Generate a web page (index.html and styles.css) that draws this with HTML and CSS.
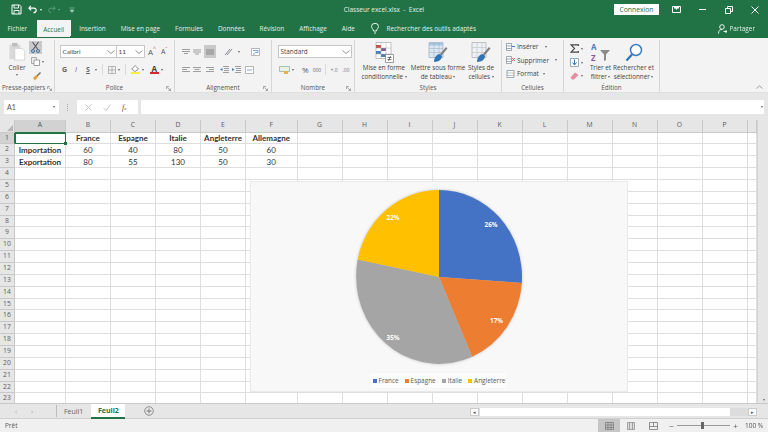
FILE: index.html
```html
<!DOCTYPE html>
<html lang="fr">
<head>
<meta charset="utf-8">
<title>Classeur excel.xlsx - Excel</title>
<link rel="stylesheet" href="styles.css">
</head>
<body>
<div class="app">
  <header class="titlebar">
    <div class="qat">
      <svg class="i-save" width="11" height="11" viewBox="0 0 11 11"><path d="M1 1h7.5L10 2.5V10H1z" fill="none" stroke="#fff"/><path d="M3 1v3h4.500V1M3 10V6.500h5V10" fill="none" stroke="#fff" stroke-width=".9"/></svg>
      <svg class="i-undo" width="10" height="9" viewBox="0 0 11 10"><path d="M3 1 1 3.500 3.500 6M1.500 3.500H6.500C10 3.500 10 8.500 6 8.500" fill="none" stroke="#fff" stroke-width="1.300"/></svg>
      <span class="caret white"></span>
      <svg class="i-redo" width="9" height="9" viewBox="0 0 11 10"><path d="M8 1l2 2.500L7.500 6M9.500 3.500H4.500C1 3.500 1 8.500 5 8.500" fill="none" stroke="#5f9f80" stroke-width="1.200"/></svg>
      <span class="caret dim"></span>
      <svg class="i-qat" width="6" height="6" viewBox="0 0 6 6"><path d="M.5 1h5M1 3h4L3 5.500z" fill="#a9cdbb" stroke="#a9cdbb" stroke-width=".6"/></svg>
    </div>
    <div class="doc-title">Classeur excel.xlsx &nbsp;-&nbsp; Excel</div>
    <div class="win">
      <button class="signin">Connexion</button>
      <svg class="w1" width="9" height="7" viewBox="0 0 9 7"><path d="M.5.500h8v6h-8z" fill="none" stroke="#fff"/><path d="M2 .500h5v2H5.500L4.500 4 3.500 2.500H2z" fill="#fff"/></svg>
      <svg class="w2" width="7" height="7" viewBox="0 0 7 7"><path d="M0 3.500h7" stroke="#fff"/></svg>
      <svg class="w3" width="8" height="8" viewBox="0 0 8 8"><path d="M.5 2.500h5v5h-5zM2.500 2.500v-2h5v5h-2" fill="none" stroke="#fff"/></svg>
      <svg class="w4" width="8" height="8" viewBox="0 0 8 8"><path d="M.5.500l7 7M7.500.500l-7 7" stroke="#fff"/></svg>
    </div>
  </header>

  <nav class="tabs">
    <span class="tab">Fichier</span>
    <span class="tab active">Accueil</span>
    <span class="tab">Insertion</span>
    <span class="tab">Mise en page</span>
    <span class="tab">Formules</span>
    <span class="tab">Données</span>
    <span class="tab">Révision</span>
    <span class="tab">Affichage</span>
    <span class="tab">Aide</span>
    <span class="tell">
      <svg width="8" height="11" viewBox="0 0 8 11"><path d="M2.500 8C2.500 6 .5 5.500.5 3.500a3.500 3.200 0 0 1 7 0C7.500 5.500 5.500 6 5.500 8zM3 10h2" fill="none" stroke="#fff" stroke-width=".9"/></svg>
      Rechercher des outils adaptés
    </span>
    <span class="share">
      <svg width="9" height="10" viewBox="0 0 9 10"><circle cx="4" cy="3" r="2.300" fill="none" stroke="#fff" stroke-width=".9"/><path d="M.5 9.500C.5 6.500 2 5.500 4 5.500M5.500 7.500h3.500M7.500 6l1.500 1.500L7.500 9" fill="none" stroke="#fff" stroke-width=".9"/></svg>
      Partager
    </span>
  </nav>

  <section class="ribbon">
    <div class="group g-clip">
      <div class="gbody clip">
        <div class="paste">
          <svg width="17" height="19" viewBox="0 0 18 21"><path d="M0 3h12v16H0z" fill="#d9d9d9"/><path d="M3 1h6v4H3z" fill="#bdbdbd"/><path d="M6 7h8l3 3v10H6z" fill="#fff" stroke="#c8c8c8" stroke-width=".8"/></svg>
          <span class="label">Coller</span>
          <span class="caret"></span>
        </div>
        <div class="clip-tools">
          <span class="cut"><svg width="9" height="11" viewBox="0 0 9 11"><path d="M1.500 0l5 7M7.500 0l-5 7" stroke="#59595f" stroke-width="1.100"/><circle cx="2" cy="9" r="1.500" fill="none" stroke="#3a6ea5"/><circle cx="7" cy="9" r="1.500" fill="none" stroke="#3a6ea5"/></svg></span>
          <span class="copy"><svg width="9" height="9" viewBox="0 0 9 9"><path d="M.5.500h5v6h-5z" fill="#eee" stroke="#999" stroke-width=".8"/><path d="M3 3h5.500v5.500H3z" fill="#fff" stroke="#888" stroke-width=".8"/></svg><span class="caret"></span></span>
          <span class="brush"><svg width="9" height="9" viewBox="0 0 9 9"><path d="M4 4l4-4 1 1-4 4z" fill="#7a6a58"/><path d="M1 6l3-3 2 2-3 3.500z" fill="#e8a33d"/></svg></span>
        </div>
      </div>
      <div class="glabel">Presse-papiers<svg class="launcher" width="5" height="5" viewBox="0 0 5 5"><path d="M.5 3V.5H3M1.500 1.500l3 3M4.500 2.500v2h-2" fill="none" stroke="#777" stroke-width=".6"/></svg></div>
    </div>

    <div class="group g-font">
      <div class="gbody stack">
        <div class="line">
          <span class="select s-font">Calibri<svg class="chev" width="8" height="4" viewBox="0 0 8 4"><path d="M.5.500 4 3.500 7.500.500" fill="none" stroke="#666" stroke-width=".7"/></svg></span>
          <span class="select s-size">11<svg class="chev" width="8" height="4" viewBox="0 0 8 4"><path d="M.5.500 4 3.500 7.500.500" fill="none" stroke="#666" stroke-width=".7"/></svg></span>
          <span class="grow-a">A<sup>^</sup></span>
          <span class="shrink-a">A<sup>ˇ</sup></span>
        </div>
        <div class="line l2 font-tools">
          <b class="f-g">G</b><i class="f-i">I</i><b class="f-s">S</b><span class="caret c-s"></span>
          <span class="sep"></span>
          <svg class="f-b" width="8" height="8" viewBox="0 0 8 8"><path d="M.5.500h7v7h-7zM4 .5v7M.5 4h7" fill="none" stroke="#999" stroke-width=".7"/></svg><span class="caret"></span>
          <span class="sep"></span>
          <span class="fillc"><svg width="9" height="7" viewBox="0 0 9 7"><path d="M4 .5l3.500 3.500L4 6.500.8 4z" fill="#fff" stroke="#777" stroke-width=".8"/></svg><u class="sw yellow"></u></span><span class="caret"></span>
          <span class="fontc">A<u class="sw red"></u></span><span class="caret"></span>
        </div>
      </div>
      <div class="glabel">Police<svg class="launcher" width="5" height="5" viewBox="0 0 5 5"><path d="M.5 3V.5H3M1.500 1.500l3 3M4.500 2.500v2h-2" fill="none" stroke="#777" stroke-width=".6"/></svg></div>
    </div>

    <div class="group g-align">
      <div class="gbody stack">
        <div class="line al1">
          <svg width="8" height="6" viewBox="0 0 8 6"><path d="M0 .5h8M0 2.500h8M2 4.500h4" stroke="#888" stroke-width=".8"/></svg>
          <svg width="8" height="6" viewBox="0 0 8 6"><path d="M0 1h8M0 3h8M2 5h4" stroke="#888" stroke-width=".8"/></svg>
          <span class="al-on"><svg width="8" height="6" viewBox="0 0 8 6"><path d="M0 1h8M0 3h8M0 5h8" stroke="#777" stroke-width=".8"/></svg></span>
          <svg width="9" height="8" viewBox="0 0 9 8"><path d="M1 7l5-6M3 7l5-6" stroke="#8a8a9a" stroke-width="1"/></svg><span class="caret"></span>
          <svg class="wrap" width="9" height="8" viewBox="0 0 9 8"><path d="M.5.500h8v7h-8z" fill="#fff" stroke="#999" stroke-width=".7"/><path d="M2 2.500h5v2H4M2 6h2" fill="none" stroke="#4a7ebb" stroke-width=".7"/></svg>
        </div>
        <div class="line l2 al2">
          <svg width="8" height="6" viewBox="0 0 8 6"><path d="M0 .5h8M0 2.500h5M0 4.500h8" stroke="#888" stroke-width=".8"/></svg>
          <svg width="8" height="6" viewBox="0 0 8 6"><path d="M0 .5h8M1.500 2.500h5M0 4.500h8" stroke="#888" stroke-width=".8"/></svg>
          <svg class="a3" width="8" height="6" viewBox="0 0 8 6"><path d="M0 .5h8M3 2.500h5M0 4.500h8" stroke="#888" stroke-width=".8"/></svg>
          <svg class="a4" width="9" height="7" viewBox="0 0 9 7"><path d="M3 .5h6M4 2.500h5M4 4.500h5M3 6.500h6" stroke="#888" stroke-width=".8"/><path d="M2.500 2v3L0 3.500z" fill="#4a7ebb"/></svg>
          <svg width="9" height="7" viewBox="0 0 9 7"><path d="M3 .5h6M4 2.500h5M4 4.500h5M3 6.500h6" stroke="#888" stroke-width=".8"/><path d="M0 2v3l2.500-1.500z" fill="#4a7ebb"/></svg>
          <svg class="a6" width="9" height="8" viewBox="0 0 9 8"><path d="M.5.500h8v7h-8z" fill="#fff" stroke="#999" stroke-width=".7"/><path d="M2 4h5" stroke="#4a7ebb" stroke-width=".7"/></svg>
        </div>
      </div>
      <div class="glabel">Alignement<svg class="launcher" width="5" height="5" viewBox="0 0 5 5"><path d="M.5 3V.5H3M1.500 1.500l3 3M4.500 2.500v2h-2" fill="none" stroke="#777" stroke-width=".6"/></svg></div>
    </div>

    <div class="group g-num">
      <div class="gbody stack">
        <div class="line">
          <span class="select s-num">Standard<svg class="chev" width="8" height="4" viewBox="0 0 8 4"><path d="M.5.500 4 3.500 7.500.500" fill="none" stroke="#666" stroke-width=".7"/></svg></span>
        </div>
        <div class="line l2 num-tools">
          <svg class="n-cur" width="11" height="8" viewBox="0 0 11 8"><path d="M.5.500h10v5H.5z" fill="#e8f0e0" stroke="#8aa" stroke-width=".7"/><path d="M5 5h4v3H5z" fill="#e7b04a"/></svg><span class="caret"></span>
          <span class="n-pc">%</span><span class="n-k">000</span>
          <span class="sep"></span>
          <span class="n-d">+,0</span><span class="n-d">,00</span>
        </div>
      </div>
      <div class="glabel">Nombre<svg class="launcher" width="5" height="5" viewBox="0 0 5 5"><path d="M.5 3V.5H3M1.500 1.500l3 3M4.500 2.500v2h-2" fill="none" stroke="#777" stroke-width=".6"/></svg></div>
    </div>

    <div class="group g-styles">
      <div class="gbody bigs">
        <div class="big b-cf">
          <svg width="19" height="21" viewBox="0 0 19 21"><path d="M1 .5h15v16H1z" fill="#fff" stroke="#aaa" stroke-width=".7"/><path d="M1 3h5v3H1z" fill="#c8504b"/><path d="M6 6h5v3H6z" fill="#7a5f8f"/><path d="M1 9h5v3H1zM6 12h5v3H6z" fill="#4a7ebb"/><path d="M6 .5v16M11 .5v16M1 6h15M1 12h15" stroke="#aaa" stroke-width=".5"/><path d="M10.500 12.500h8v8h-8z" fill="#fff" stroke="#777" stroke-width=".7"/><path d="M12.500 15.500h4M12.500 17.500h4M15.500 14l-2 5" stroke="#444" stroke-width=".7"/></svg>
          <span class="label">Mise en forme</span>
          <span class="label">conditionnelle<span class="caret"></span></span>
        </div>
        <div class="big b-tb">
          <svg width="20" height="21" viewBox="0 0 20 21"><path d="M1 .5h14v15H1z" fill="#dbe7f3" stroke="#9ab" stroke-width=".7"/><path d="M1 .5h14v3H1z" fill="#a9c4df"/><path d="M1 6.500h14M1 10.500h14M6 .5v15M11 .5v15" stroke="#9ab" stroke-width=".5"/><path d="M18 5l1.500 1.500-6 7L12 12z" fill="#7f7f7f"/><path d="M6 20c0-5 3-8 6-8l2 2c0 3-3 6-8 6z" fill="#2e75b6"/></svg>
          <span class="label">Mettre sous forme</span>
          <span class="label">de tableau<span class="caret"></span></span>
        </div>
        <div class="big b-cs">
          <svg width="20" height="21" viewBox="0 0 20 21"><path d="M1 .5h14v15H1z" fill="#eef2f6" stroke="#aaa" stroke-width=".7"/><path d="M1 5.500h14M1 10.500h14M6 .5v15M11 .5v15" stroke="#b5b5b5" stroke-width=".5"/><path d="M18 5l1.500 1.500-6 7L12 12z" fill="#7f7f7f"/><path d="M6 20c0-5 3-8 6-8l2 2c0 3-3 6-8 6z" fill="#2e75b6"/></svg>
          <span class="label">Styles de</span>
          <span class="label">cellules<span class="caret"></span></span>
        </div>
      </div>
      <div class="glabel">Styles</div>
    </div>

    <div class="group g-cells">
      <div class="gbody cells">
        <div class="cellrow"><svg width="9" height="8" viewBox="0 0 9 8"><path d="M.5.500h5v7h-5zM.5 3h5M.5 5.500h5" fill="#fff" stroke="#789" stroke-width=".7"/><path d="M6 3.500h3" stroke="#4a7ebb"/></svg>Insérer<span class="caret c-ins"></span></div>
        <div class="cellrow"><svg width="9" height="8" viewBox="0 0 9 8"><path d="M.5.500h5v7h-5zM.5 3h5M.5 5.500h5" fill="#fff" stroke="#789" stroke-width=".7"/><path d="M6 2l3 3M9 2l-3 3" stroke="#c8504b" stroke-width=".8"/></svg>Supprimer<span class="caret c-sup"></span></div>
        <div class="cellrow"><svg width="9" height="9" viewBox="0 0 9 9"><path d="M1 1.500h7v7H1z" fill="#fff" stroke="#789" stroke-width=".7"/><path d="M1 4h7M1 6.500h7" stroke="#789" stroke-width=".5"/></svg>Format<span class="caret"></span></div>
      </div>
      <div class="glabel">Cellules</div>
    </div>

    <div class="group g-edit">
      <div class="gbody edit">
        <div class="edit-col">
          <span class="ed"><svg width="9" height="9" viewBox="0 0 9 9"><path d="M8.500 2V.8H1L4.500 4.500 1 8.200h7.500V7" fill="none" stroke="#444" stroke-width="1.200"/></svg><span class="caret"></span></span>
          <span class="ed"><svg width="9" height="9" viewBox="0 0 9 9"><path d="M.5.500h8v8h-8z" fill="#fff" stroke="#789" stroke-width=".7"/><path d="M4.500 1.500v5M2.500 4.500l2 2.500 2-2.500" fill="none" stroke="#2e75b6"/></svg><span class="caret"></span></span>
          <span class="ed"><svg width="9" height="8" viewBox="0 0 9 8"><path d="M5 .5l3.500 2.500L4 7.500H2L.5 5.500z" fill="#e88ea3"/></svg><span class="caret"></span></span>
        </div>
        <div class="big b-sort">
          <svg width="19" height="21" viewBox="0 0 19 21"><text x="0" y="8" class="az-a">A</text><text x="0" y="19" class="az-z">Z</text><path d="M9 8h10l-4 4.500V18l-2 1v-6.500z" fill="#8a8a8a"/></svg>
          <span class="label">Trier et</span>
          <span class="label">filtrer<span class="caret"></span></span>
        </div>
        <div class="big b-find">
          <svg width="18" height="21" viewBox="0 0 18 21"><circle cx="11" cy="8" r="5.500" fill="#fff" stroke="#3a7cc0" stroke-width="1.500"/><path d="M7 12.500 1.500 18.500" stroke="#2e75b6" stroke-width="2.200"/></svg>
          <span class="label">Rechercher et</span>
          <span class="label">sélectionner<span class="caret"></span></span>
        </div>
      </div>
      <div class="glabel">Édition</div>
    </div>
    <div class="collapse"><svg width="7" height="4" viewBox="0 0 7 4"><path d="M.5 3.500 3.500.8l3 2.700" fill="none" stroke="#888" stroke-width=".8"/></svg></div>
  </section>

  <section class="formula">
    <div class="namebox">A1<span class="caret"></span></div>
    <div class="dots"></div>
    <div class="fx-btns">
      <svg width="7" height="7" viewBox="0 0 7 7"><path d="M.5.500l6 6M6.500.500l-6 6" stroke="#c4c4c4"/></svg>
      <svg width="8" height="7" viewBox="0 0 8 7"><path d="M.5 4l2.500 2.500L7.500.5" fill="none" stroke="#c4c4c4"/></svg>
      <span class="fx">f<small>x</small></span>
    </div>
    <div class="fx-input"></div>
    <span class="caret fx-more"></span>
  </section>

  <section class="workarea">
    <div class="sheet">
      <div class="c corner"><svg width="6" height="6" viewBox="0 0 6 6"><path d="M6 0v6H0z" fill="#b5b5b5"/></svg></div><div class="c ch sel">A</div><div class="c ch">B</div><div class="c ch">C</div><div class="c ch">D</div><div class="c ch">E</div><div class="c ch">F</div><div class="c ch">G</div><div class="c ch">H</div><div class="c ch">I</div><div class="c ch">J</div><div class="c ch">K</div><div class="c ch">L</div><div class="c ch">M</div><div class="c ch">N</div><div class="c ch">O</div><div class="c ch">P</div><div class="c ch"></div>
      <div class="c rh sel">1</div><div class="c active"></div><div class="c b">France</div><div class="c b">Espagne</div><div class="c b">Italie</div><div class="c b">Angleterre</div><div class="c b">Allemagne</div><div class="c"></div><div class="c"></div><div class="c"></div><div class="c"></div><div class="c"></div><div class="c"></div><div class="c"></div><div class="c"></div><div class="c"></div><div class="c"></div><div class="c"></div>
      <div class="c rh">2</div><div class="c b">Importation</div><div class="c">60</div><div class="c">40</div><div class="c">80</div><div class="c">50</div><div class="c">60</div><div class="c"></div><div class="c"></div><div class="c"></div><div class="c"></div><div class="c"></div><div class="c"></div><div class="c"></div><div class="c"></div><div class="c"></div><div class="c"></div><div class="c"></div>
      <div class="c rh">3</div><div class="c b">Exportation</div><div class="c">80</div><div class="c">55</div><div class="c">130</div><div class="c">50</div><div class="c">30</div><div class="c"></div><div class="c"></div><div class="c"></div><div class="c"></div><div class="c"></div><div class="c"></div><div class="c"></div><div class="c"></div><div class="c"></div><div class="c"></div><div class="c"></div>
      <div class="c rh">4</div><div class="c"></div><div class="c"></div><div class="c"></div><div class="c"></div><div class="c"></div><div class="c"></div><div class="c"></div><div class="c"></div><div class="c"></div><div class="c"></div><div class="c"></div><div class="c"></div><div class="c"></div><div class="c"></div><div class="c"></div><div class="c"></div><div class="c"></div>
      <div class="c rh">5</div><div class="c"></div><div class="c"></div><div class="c"></div><div class="c"></div><div class="c"></div><div class="c"></div><div class="c"></div><div class="c"></div><div class="c"></div><div class="c"></div><div class="c"></div><div class="c"></div><div class="c"></div><div class="c"></div><div class="c"></div><div class="c"></div><div class="c"></div>
      <div class="c rh">6</div><div class="c"></div><div class="c"></div><div class="c"></div><div class="c"></div><div class="c"></div><div class="c"></div><div class="c"></div><div class="c"></div><div class="c"></div><div class="c"></div><div class="c"></div><div class="c"></div><div class="c"></div><div class="c"></div><div class="c"></div><div class="c"></div><div class="c"></div>
      <div class="c rh">7</div><div class="c"></div><div class="c"></div><div class="c"></div><div class="c"></div><div class="c"></div><div class="c"></div><div class="c"></div><div class="c"></div><div class="c"></div><div class="c"></div><div class="c"></div><div class="c"></div><div class="c"></div><div class="c"></div><div class="c"></div><div class="c"></div><div class="c"></div>
      <div class="c rh">8</div><div class="c"></div><div class="c"></div><div class="c"></div><div class="c"></div><div class="c"></div><div class="c"></div><div class="c"></div><div class="c"></div><div class="c"></div><div class="c"></div><div class="c"></div><div class="c"></div><div class="c"></div><div class="c"></div><div class="c"></div><div class="c"></div><div class="c"></div>
      <div class="c rh">9</div><div class="c"></div><div class="c"></div><div class="c"></div><div class="c"></div><div class="c"></div><div class="c"></div><div class="c"></div><div class="c"></div><div class="c"></div><div class="c"></div><div class="c"></div><div class="c"></div><div class="c"></div><div class="c"></div><div class="c"></div><div class="c"></div><div class="c"></div>
      <div class="c rh">10</div><div class="c"></div><div class="c"></div><div class="c"></div><div class="c"></div><div class="c"></div><div class="c"></div><div class="c"></div><div class="c"></div><div class="c"></div><div class="c"></div><div class="c"></div><div class="c"></div><div class="c"></div><div class="c"></div><div class="c"></div><div class="c"></div><div class="c"></div>
      <div class="c rh">11</div><div class="c"></div><div class="c"></div><div class="c"></div><div class="c"></div><div class="c"></div><div class="c"></div><div class="c"></div><div class="c"></div><div class="c"></div><div class="c"></div><div class="c"></div><div class="c"></div><div class="c"></div><div class="c"></div><div class="c"></div><div class="c"></div><div class="c"></div>
      <div class="c rh">12</div><div class="c"></div><div class="c"></div><div class="c"></div><div class="c"></div><div class="c"></div><div class="c"></div><div class="c"></div><div class="c"></div><div class="c"></div><div class="c"></div><div class="c"></div><div class="c"></div><div class="c"></div><div class="c"></div><div class="c"></div><div class="c"></div><div class="c"></div>
      <div class="c rh">13</div><div class="c"></div><div class="c"></div><div class="c"></div><div class="c"></div><div class="c"></div><div class="c"></div><div class="c"></div><div class="c"></div><div class="c"></div><div class="c"></div><div class="c"></div><div class="c"></div><div class="c"></div><div class="c"></div><div class="c"></div><div class="c"></div><div class="c"></div>
      <div class="c rh">14</div><div class="c"></div><div class="c"></div><div class="c"></div><div class="c"></div><div class="c"></div><div class="c"></div><div class="c"></div><div class="c"></div><div class="c"></div><div class="c"></div><div class="c"></div><div class="c"></div><div class="c"></div><div class="c"></div><div class="c"></div><div class="c"></div><div class="c"></div>
      <div class="c rh">15</div><div class="c"></div><div class="c"></div><div class="c"></div><div class="c"></div><div class="c"></div><div class="c"></div><div class="c"></div><div class="c"></div><div class="c"></div><div class="c"></div><div class="c"></div><div class="c"></div><div class="c"></div><div class="c"></div><div class="c"></div><div class="c"></div><div class="c"></div>
      <div class="c rh">16</div><div class="c"></div><div class="c"></div><div class="c"></div><div class="c"></div><div class="c"></div><div class="c"></div><div class="c"></div><div class="c"></div><div class="c"></div><div class="c"></div><div class="c"></div><div class="c"></div><div class="c"></div><div class="c"></div><div class="c"></div><div class="c"></div><div class="c"></div>
      <div class="c rh">17</div><div class="c"></div><div class="c"></div><div class="c"></div><div class="c"></div><div class="c"></div><div class="c"></div><div class="c"></div><div class="c"></div><div class="c"></div><div class="c"></div><div class="c"></div><div class="c"></div><div class="c"></div><div class="c"></div><div class="c"></div><div class="c"></div><div class="c"></div>
      <div class="c rh">18</div><div class="c"></div><div class="c"></div><div class="c"></div><div class="c"></div><div class="c"></div><div class="c"></div><div class="c"></div><div class="c"></div><div class="c"></div><div class="c"></div><div class="c"></div><div class="c"></div><div class="c"></div><div class="c"></div><div class="c"></div><div class="c"></div><div class="c"></div>
      <div class="c rh">19</div><div class="c"></div><div class="c"></div><div class="c"></div><div class="c"></div><div class="c"></div><div class="c"></div><div class="c"></div><div class="c"></div><div class="c"></div><div class="c"></div><div class="c"></div><div class="c"></div><div class="c"></div><div class="c"></div><div class="c"></div><div class="c"></div><div class="c"></div>
      <div class="c rh">20</div><div class="c"></div><div class="c"></div><div class="c"></div><div class="c"></div><div class="c"></div><div class="c"></div><div class="c"></div><div class="c"></div><div class="c"></div><div class="c"></div><div class="c"></div><div class="c"></div><div class="c"></div><div class="c"></div><div class="c"></div><div class="c"></div><div class="c"></div>
      <div class="c rh">21</div><div class="c"></div><div class="c"></div><div class="c"></div><div class="c"></div><div class="c"></div><div class="c"></div><div class="c"></div><div class="c"></div><div class="c"></div><div class="c"></div><div class="c"></div><div class="c"></div><div class="c"></div><div class="c"></div><div class="c"></div><div class="c"></div><div class="c"></div>
      <div class="c rh">22</div><div class="c"></div><div class="c"></div><div class="c"></div><div class="c"></div><div class="c"></div><div class="c"></div><div class="c"></div><div class="c"></div><div class="c"></div><div class="c"></div><div class="c"></div><div class="c"></div><div class="c"></div><div class="c"></div><div class="c"></div><div class="c"></div><div class="c"></div>
      <div class="c rh">23</div><div class="c"></div><div class="c"></div><div class="c"></div><div class="c"></div><div class="c"></div><div class="c"></div><div class="c"></div><div class="c"></div><div class="c"></div><div class="c"></div><div class="c"></div><div class="c"></div><div class="c"></div><div class="c"></div><div class="c"></div><div class="c"></div><div class="c"></div>
    </div>
    <div class="vscroll"><span class="caret"></span></div>
    <figure class="chart">
      <svg class="pie" width="378" height="190" viewBox="0 0 378 190">
        <g class="slices">
          <path d="M189 96V9A83 87 0 0 1 271.800 101.900Z" fill="#4472c4"/>
          <path d="M189 96 271.800 101.900A83 87 0 0 1 222.100 175.800Z" fill="#ed7d31"/>
          <path d="M189 96 222.100 175.800A83 87 0 0 1 106.200 96 83 87 0 0 1 107.700 78.400Z" fill="#a5a5a5"/>
          <path d="M189 96 107.700 78.400A83 87 0 0 1 189 9Z" fill="#ffc000"/>
        </g>
        <text x="241" y="46" class="pct">26%</text>
        <text x="246.500" y="142" class="pct">17%</text>
        <text x="143" y="159" class="pct">35%</text>
        <text x="143" y="39" class="pct">22%</text>
      </svg>
      <figcaption class="legend">
        <span><u class="k blue"></u>France</span>
        <span><u class="k orange"></u>Espagne</span>
        <span><u class="k gray"></u>Italie</span>
        <span><u class="k gold"></u>Angleterre</span>
      </figcaption>
    </figure>
  </section>

  <section class="sheetbar">
    <span class="nav">‹</span><span class="nav">›</span>
    <span class="navsep"></span>
    <span class="stab">Feuil1</span>
    <span class="stab on">Feuil2</span>
    <svg class="plus" width="10" height="10" viewBox="0 0 10 10"><circle cx="5" cy="5" r="4.300" fill="none" stroke="#777" stroke-width=".8"/><path d="M5 2.500v5M2.500 5h5" stroke="#666" stroke-width=".8"/></svg>
    <div class="hscroll"><span class="hbtn">◂</span><span class="hthumb"></span><span class="hbtn">▸</span></div>
  </section>

  <footer class="status">
    <span class="ready">Prêt</span>
    <div class="views">
      <span class="view on"><svg width="9" height="8" viewBox="0 0 9 8"><path d="M.5.500h8v7h-8zM.5 3h8M.5 5.500h8M3 .5v7M6 .5v7" fill="none" stroke="#666" stroke-width=".6"/></svg></span>
      <span class="view"><svg width="8" height="8" viewBox="0 0 8 8"><path d="M.5.500h7v7h-7zM2.500.5v7M5.500.5v7" fill="#ddd" stroke="#777" stroke-width=".6"/></svg></span>
      <span class="view"><svg width="9" height="8" viewBox="0 0 9 8"><path d="M.5.500h8v7h-8zM4.500.5v4M.5 4.500h8" fill="none" stroke="#666" stroke-width=".7"/></svg></span>
    </div>
    <div class="zoom">
      <span class="zm">−</span>
      <span class="slider"><u></u></span>
      <span class="zm">+</span>
      <span class="pctz">100 %</span>
    </div>
  </footer>
</div>
</body>
</html>
```
FILE: styles.css
```css
* { box-sizing: border-box; }
html, body { margin: 0; padding: 0; }
body { width: 768px; height: 432px; overflow: hidden; font-family: "Open Sans", "Noto Sans", sans-serif; font-size: 7px; color: #444; background: #f3f3f3; }
svg { display: block; flex: none; }
u { text-decoration: none; display: block; }
button { font: inherit; }

.app { display: flex; flex-direction: column; width: 768px; height: 432px; filter: blur(.35px); }

.caret { display: inline-block; width: 0; height: 0; margin-left: 2px; border: 1.500px solid transparent; border-top: 2px solid #666; border-bottom: 0; vertical-align: middle; flex: none; }
.caret.white { border-top-color: #fff; }
.caret.dim { border-top-color: #6fa98c; }

/* title bar */
.titlebar { height: 19px; background: #217346; color: #fff; display: grid; grid-template-columns: 1fr auto 1fr; align-items: center; }
.qat { display: flex; align-items: center; padding-left: 11px; }
.i-undo { margin-left: 6px; }
.i-redo { margin-left: 5px; }
.i-qat { margin-left: 9px; }
.doc-title { font-size: 6.500px; color: #e6f0ea; }
.win { display: flex; align-items: center; justify-content: flex-end; }
.signin { width: 45px; height: 11px; padding: 0; border: 0; background: #fff; color: #217346; font-size: 6.800px; line-height: 11px; }
.w1 { margin-left: 13px; }
.w2 { margin-left: 18px; }
.w3 { margin-left: 19px; }
.w4 { margin-left: 18px; margin-right: 9px; }

/* tabs */
.tabs { height: 19px; background: #217346; color: #e2efe8; display: flex; align-items: center; font-size: 6.400px; }
.tab { padding: 0 7.500px; line-height: 19px; white-space: nowrap; }
.tab.active { background: #f3f3f3; color: #217346; padding: 0 6.500px; margin: 0 0 0 1px; height: 19px; }
.tell { display: flex; align-items: center; gap: 7px; margin-left: 9px; white-space: nowrap; }
.share { display: flex; align-items: center; gap: 2px; margin-left: auto; margin-right: 13px; }

/* ribbon */
.ribbon { height: 54px; background: #f3f3f3; display: flex; position: relative; font-size: 6.300px; }
.group { display: flex; flex-direction: column; border-right: 1px solid #d6d6d6; margin-top: 2px; height: 52px; flex: none; }
.gbody { flex: 1; min-height: 0; }
.glabel { height: 10px; line-height: 11px; text-align: center; font-size: 6.300px; color: #555; position: relative; white-space: nowrap; }
.launcher { position: absolute; right: 3px; top: 4px; }
.g-clip { width: 55px; }
.g-font { width: 120px; }
.g-align { width: 97px; }
.g-num { width: 83px; }
.g-styles { width: 147px; }
.g-cells { width: 62px; }
.g-edit { width: 96px; }
.g-clip .glabel { text-align: left; padding-left: 2px; }
.g-clip .launcher { right: 2px; }
.label { display: block; line-height: 9px; white-space: nowrap; text-align: center; }

.clip { display: flex; padding: 1px 0 0 5px; }
.paste { width: 24px; display: flex; flex-direction: column; align-items: center; }
.paste svg { margin: 1px 0 1.500px; }
.paste .caret { margin: 2px 0 0; }
.clip-tools { display: flex; flex-direction: column; align-items: flex-start; }
.cut { width: 13px; height: 13px; background: #c9c9c9; display: flex; align-items: center; justify-content: center; }
.copy { display: flex; align-items: center; margin: 3px 0 0 2px; }
.brush { margin: 6px 0 0 3px; }

.stack { display: flex; flex-direction: column; padding: 5px 0 0 5px; }
.line { display: flex; align-items: center; height: 13px; }
.l2 { margin-top: 5px; }
.select { height: 13px; background: #fff; border: 1px solid #c6c6c6; display: flex; align-items: center; justify-content: space-between; padding: 0 1px 0 1.500px; font-size: 6.400px; font-family: Lato, "Open Sans", sans-serif; color: #444; }
.s-font { width: 57px; }
.s-size { width: 29px; margin-left: -1px; }
.s-num { width: 74px; margin-left: 1px; font-family: "Open Sans", sans-serif; }
.grow-a, .shrink-a { font-size: 8px; margin-left: 3px; color: #555; display: inline-flex; }
.shrink-a { font-size: 7px; margin-left: 5px; }
sup { font-size: 5px; line-height: 5px; color: #c0504d; vertical-align: baseline; }

.font-tools { padding-left: 2px; font-size: 7px; color: #666; }
.f-i { margin-left: 8px; }
.f-s { margin-left: 9px; text-decoration: underline; }
.c-s { margin-left: 5px; }
.sep { width: 1px; height: 11px; background: #dadada; margin: 0 5px; }
.fillc, .fontc { display: flex; flex-direction: column; align-items: center; width: 9px; line-height: 7px; }
.fontc { margin-left: 6px; font-weight: 700; color: #444; font-size: 8px; }
.sw { width: 9px; height: 2px; }
.yellow { background: #f6ee3a; }
.red { background: #d9282c; }

.al1, .al2 { padding-left: 2px; }
.al1 { gap: 3px; }
.al-on { width: 12px; height: 13px; background: #c9c9c9; display: flex; align-items: center; justify-content: center; margin-right: 5px; }
.wrap { margin-left: 8px; }
.al2 { gap: 3px; }
.a3 { margin-left: 2px; }
.a4 { margin-left: 3px; }
.a6 { margin-left: 1px; }

.num-tools { padding-left: 2px; }
.n-pc { margin-left: 8px; font-size: 8px; color: #555; }
.n-k { margin-left: 4px; font-size: 5px; color: #666; }
.num-tools .sep { margin: 0 4px; }
.n-d { width: 10px; text-align: center; font-size: 5px; color: #777; margin-right: 4px; }

.bigs { display: flex; padding-top: 2px; }
.big { display: flex; flex-direction: column; align-items: center; }
.big svg { height: 21px; }
.big .caret { margin-left: 1.500px; }
.b-cf { width: 54px; margin-left: 2px; }
.b-tb { width: 54px; }
.b-cs { width: 36px; margin-left: -2px; }

.cells { padding: 2px 0 0 4px; display: flex; flex-direction: column; gap: 4px; font-size: 6.500px; }
.cellrow { display: flex; align-items: center; height: 9.500px; gap: 2px; white-space: nowrap; }
.c-ins { margin-left: 4px; }
.c-sup { margin-left: 4px; }

.edit { display: flex; padding-top: 2px; }
.edit-col { width: 20px; padding: 2px 0 0 6px; display: flex; flex-direction: column; gap: 5px; }
.ed { display: flex; align-items: center; }
.b-sort { width: 27px; margin-left: 3px; }
.b-find { width: 43px; margin-left: -2px; }
.az-a { font: 700 8px "Open Sans", sans-serif; fill: #4a7ebb; }
.az-z { font: 700 8px "Open Sans", sans-serif; fill: #8a5aa8; }
.collapse { position: absolute; right: 5px; bottom: 3px; }

/* formula bar */
.formula { height: 28px; background: #e6e6e6; border-top: 1px solid #e0e0e0; display: flex; align-items: flex-start; padding: 7px 0 0 4px; position: relative; font-family: Lato, sans-serif; }
.namebox { width: 55px; height: 14px; background: #fff; display: flex; align-items: center; justify-content: space-between; padding: 0 4px 0 3px; font-size: 7px; color: #555; }
.dots { width: 1px; height: 7px; margin: 4px 9px 0 8px; border-left: 1px dotted #aaa; }
.fx-btns { width: 61px; height: 14px; background: #fff; display: flex; align-items: center; gap: 11px; padding-left: 8px; }
.fx { font-family: "Liberation Serif", serif; font-style: italic; font-size: 8px; color: #555; }
.fx small { font-size: 5px; }
.fx-input { width: 623px; height: 14px; background: #fff; margin-left: 3px; }
.fx-more { position: absolute; right: 5px; top: 13px; }

/* sheet */
.workarea { height: 283px; position: relative; display: flex; overflow: hidden; background: #e6e6e6; }
.sheet { width: 757px; height: 283px; overflow: hidden; background: #fff; display: grid; grid-template-columns: 15px 51px 45px 45px 45px 45px 51.500px repeat(10, 45px) 9.500px; grid-template-rows: 12.500px repeat(23, 11.860px); font-family: Lato, "Open Sans", sans-serif; font-size: 8px; color: #333; }
.c { border-right: 1px solid #dedede; border-bottom: 1px solid #dedede; display: flex; align-items: center; justify-content: center; white-space: nowrap; line-height: 1; min-width: 0; }
.b { font-weight: 700; }
.corner { background: #e6e6e6; justify-content: flex-end; align-items: flex-end; padding: 0 1px 1px 0; border-color: #c8c8c8; }
.ch, .rh { background: #e6e6e6; border-color: #c8c8c8; color: #5c5c5c; font-family: "Open Sans", sans-serif; font-size: 6.800px; }
.ch.sel, .rh.sel { background: #d2d2d2; color: #3f5f4e; border-bottom: 1px solid #217346; }
.rh.sel { border-bottom-color: #c8c8c8; border-right: 1px solid #217346; }
.active { border: 1.500px solid #217346; position: relative; }
.active::after { content: ""; position: absolute; right: -2px; bottom: -2px; width: 3px; height: 3px; background: #217346; }
.vscroll { flex: 1; display: flex; align-items: flex-end; justify-content: center; padding-bottom: 2px; border-left: 1px solid #d4d4d4; }

.chart { position: absolute; left: 250px; top: 61px; width: 378px; height: 211px; margin: 0; background: #f8f8f8; border: 1px solid #e9e9e9; }
.pie { margin: -1px 0 0 -1px; }
.slices { filter: drop-shadow(0 0 1.500px rgba(0,0,0,.22)); }
.pct { font: 700 6.300px "Open Sans", sans-serif; fill: #fff; text-anchor: middle; }
.legend { position: absolute; left: 120px; top: 191px; width: 136px; height: 15px; background: #fcfcfc; display: flex; align-items: center; justify-content: center; gap: 6px; font-size: 6.400px; color: #595959; }
.legend span { display: flex; align-items: center; gap: 2px; }
.k { width: 4px; height: 4px; }
.blue { background: #4472c4; }
.orange { background: #ed7d31; }
.gray { background: #a5a5a5; }
.gold { background: #ffc000; }

/* sheet tabs */
.sheetbar { height: 16px; background: #e6e6e6; display: flex; align-items: center; position: relative; border-top: 1px solid #c8c8c8; border-bottom: 1px solid #d0d0d0; font-size: 7px; color: #666; }
.nav { width: 16px; text-align: center; color: #aaa; margin-left: 8px; margin-right: -8px; }
.nav + .nav { margin-left: 8px; }
.navsep { width: 1px; height: 12px; background: #bdbdbd; margin-left: 24px; }
.stab { padding: 0 7px; line-height: 15px; }
.stab.on { background: #fff; color: #217346; font-weight: 700; border-bottom: 2px solid #217346; width: 34px; padding: 0; text-align: center; margin-left: 1px; height: 15px; line-height: 13px; }
.plus { margin-left: 19px; }
.hscroll { position: absolute; left: 470px; right: 11px; top: 4px; height: 8px; display: flex; background: #dcdcdc; }
.hbtn { width: 9px; background: #fafafa; border: 1px solid #ccc; font-size: 5px; line-height: 6px; text-align: center; color: #555; }
.hthumb { width: 250px; background: #fff; margin-left: 1px; margin-right: auto; }

/* status bar */
.status { height: 13px; background: #f0f0f0; display: flex; align-items: center; font-size: 6.500px; color: #555; }
.ready { margin-left: 5px; }
.views { display: flex; margin-left: auto; align-items: center; }
.view { width: 22px; height: 13px; display: flex; align-items: center; justify-content: center; }
.view.on { background: #c6c6c6; }
.zoom { display: flex; align-items: center; margin-left: 4px; margin-right: 5px; }
.zm { width: 7px; text-align: center; font-size: 8px; line-height: 8px; }
.slider { width: 53px; height: 1px; background: #999; margin: 0 2px; position: relative; }
.slider u { position: absolute; left: 24px; top: -3px; width: 3px; height: 7px; background: #666; }
.pctz { margin-left: 6px; width: 18px; white-space: nowrap; }
```
